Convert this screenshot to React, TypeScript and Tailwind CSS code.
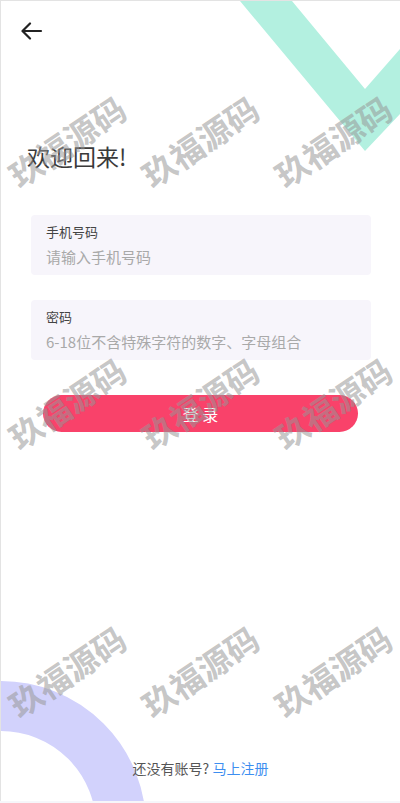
import React from 'react'

const watermarkRows = ['top-[108px]', 'top-[370px]', 'top-[638px]']

function Watermarks() {
  return (
    <div className="pointer-events-none absolute inset-0 z-20">
      {watermarkRows.map((row) => (
        <div key={row} className={`absolute left-0 right-0 flex h-[64px] ${row}`}>
          {[0, 1, 2].map((i) => (
            <div key={i} className="flex w-1/3 items-center justify-center">
              <span className="rotate-[-34deg] whitespace-nowrap text-[33px] font-bold leading-none text-[rgba(150,150,150,0.55)]">
                玖福源码
              </span>
            </div>
          ))}
        </div>
      ))}
    </div>
  )
}

function Field({ label, placeholder, type = 'text' }: { label: string; placeholder: string; type?: string }) {
  return (
    <div className="flex h-[60px] flex-col rounded-[4px] bg-[#f7f5fb] px-[15px] pt-[8px]">
      <label className="text-[13px] leading-[18px] text-[#444]">{label}</label>
      <input
        type={type}
        placeholder={placeholder}
        className="mt-[6px] w-full bg-transparent text-[15px] leading-[20px] text-[#333] outline-none placeholder:text-[#a9a9a9]"
      />
    </div>
  )
}

export default function App() {
  return (
    <div className="h-[803px] w-[400px] bg-[#f6f6fa] font-['Noto_Sans_CJK_SC',sans-serif]">
      <div className="relative flex h-[801px] flex-col overflow-hidden border-l border-t border-[#e3e3e3] bg-white">
        {/* green corner stripe */}
        <svg className="absolute right-0 top-0" width="160" height="150" viewBox="0 0 160 150">
          <polygon points="0,0 52,0 125,88 160,48 160,113 125,150" fill="#b3f0e0" />
        </svg>
        {/* purple ring */}
        <svg className="absolute bottom-0 left-0" width="150" height="125" viewBox="0 0 150 125">
          <circle cx="0" cy="150" r="120" fill="none" stroke="#d2d2fc" strokeWidth="50" />
        </svg>

        <div className="relative z-10 flex h-[60px] items-center pl-[20px]">
          <svg width="22" height="18" viewBox="0 0 22 18" fill="none" stroke="#222" strokeWidth="2.2" strokeLinecap="round" strokeLinejoin="round">
            <path d="M20 9H2" />
            <path d="M9 1.5L1.5 9L9 16.5" />
          </svg>
        </div>

        <h1 className="relative z-10 mt-[79px] pl-[26px] text-[23px] font-normal leading-[32px] text-[#3a3a3a]">欢迎回来!</h1>

        <div className="relative z-10 mt-[43px] flex flex-col gap-[25px] pl-[30px] pr-[29px]">
          <Field label="手机号码" placeholder="请输入手机号码" />
          <Field label="密码" placeholder="6-18位不含特殊字符的数字、字母组合" type="password" />
        </div>

        <div className="relative z-10 mt-[35px] px-[42px]">
          <button className="h-[37px] w-full rounded-full bg-[#f9426a] text-[16px] text-white">登 录</button>
        </div>

        <p className="relative z-10 mt-auto pb-[23px] text-center text-[14px] leading-[20px] text-[#555]">
          还没有账号? <span className="text-[#3d8ef0]">马上注册</span>
        </p>

        <Watermarks />
      </div>
    </div>
  )
}
